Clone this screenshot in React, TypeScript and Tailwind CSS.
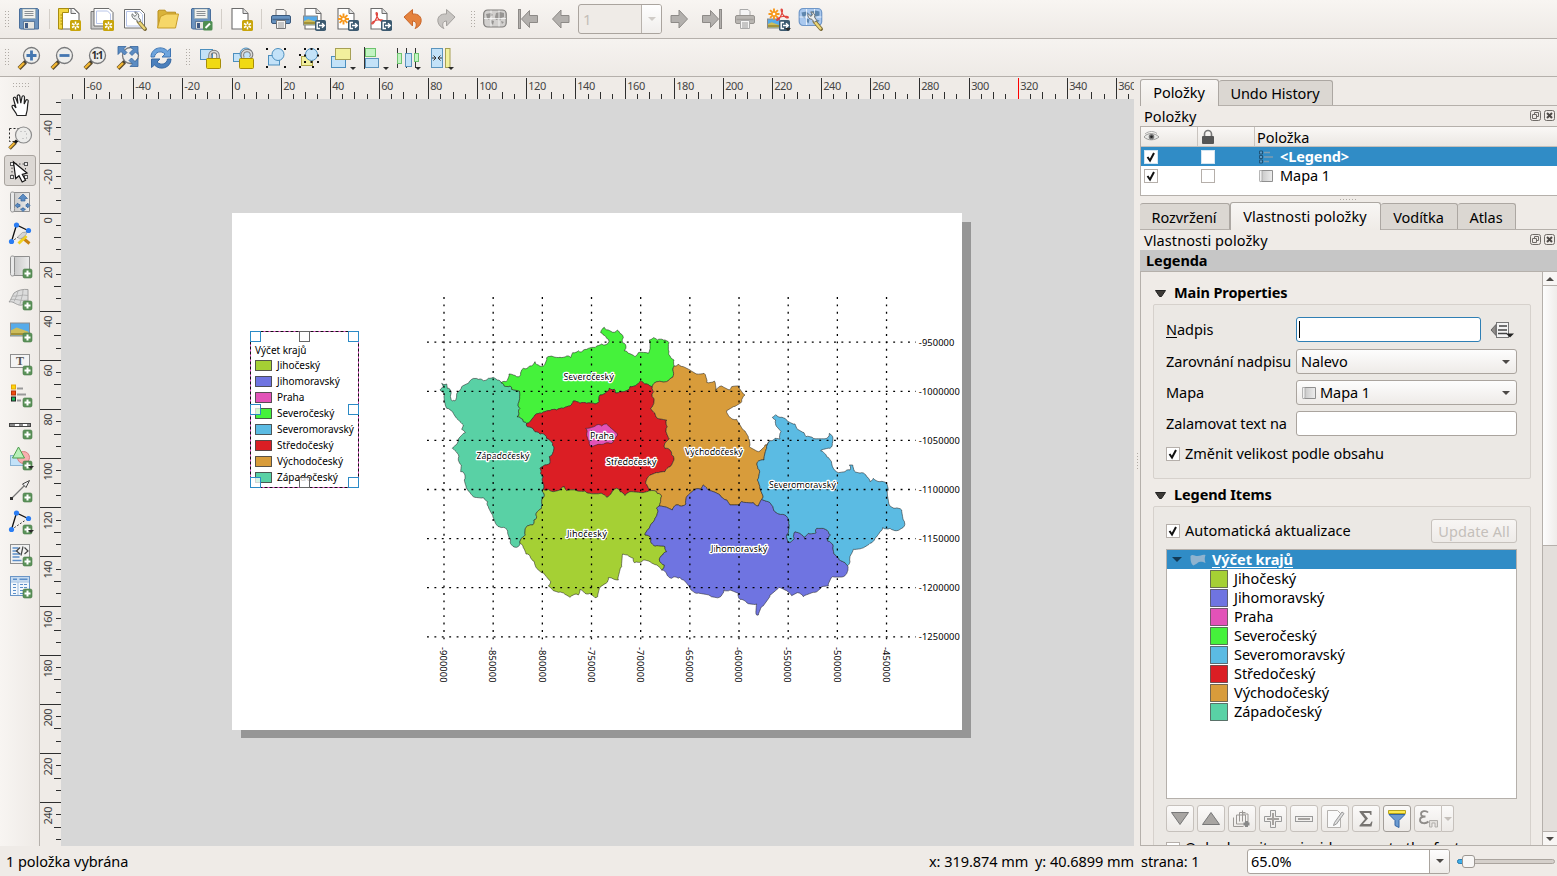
import React from 'react';

type Pt = [number, number];
type Kids = { children?: React.ReactNode };

/* ---------- shared data ---------- */

const REGIONS = [
  { name: 'Jihočeský', color: '#a5d034' },
  { name: 'Jihomoravský', color: '#6f74e1' },
  { name: 'Praha', color: '#e252b8' },
  { name: 'Severočeský', color: '#45f23b' },
  { name: 'Severomoravský', color: '#5bbbe3' },
  { name: 'Středočeský', color: '#db1e24' },
  { name: 'Východočeský', color: '#d89c3b' },
  { name: 'Západočeský', color: '#59d1a5' },
];

/* ---------- icons ---------- */

const Ico = ({ children }: Kids) => (
  <svg width="24" height="24" viewBox="0 0 24 24" className="block shrink-0 overflow-visible">{children}</svg>
);

const Plus = () => (
  <g>
    <rect x="15" y="15" width="9" height="9" rx="1.6" fill="#5b9259" stroke="#487a48" strokeWidth=".6" />
    <path d="M19.5 16.500v6M16.5 19.500h6" stroke="#fff" strokeWidth="2" />
  </g>
);
const Star = () => (
  <g>
    <rect x="13" y="13" width="11" height="11" rx="1.6" fill="#c8a50b" />
    <path d="M18.5 14.5v8M15 16.5l7 4M22 16.5l-7 4" stroke="#fff" strokeWidth="1.5" />
    <circle cx="18.5" cy="18.5" r="1.3" fill="#c8a50b" />
  </g>
);
const Export = () => (
  <g>
    <rect x="13" y="13" width="11" height="11" rx="1.8" fill="#3c5a70" />
    <path d="M18 15.5h-2.8v6H18M17 18.5h5M20 16.3l2.3 2.2-2.3 2.2" fill="none" stroke="#fff" strokeWidth="1.4" />
  </g>
);
const Caret = ({ x = 19, y = 20 }: { x?: number; y?: number }) => (
  <path d={`M${x} ${y}h6l-3 3z`} fill="#2b2b2b" />
);
const Lens = ({ children }: Kids) => (
  <Ico>
    <path d="M2 22.5l6.5-6.5" stroke="#5a4a2a" strokeWidth="4" />
    <path d="M2 22l5-5" stroke="#f2b632" strokeWidth="2.4" />
    <path d="M8 16l2-2" stroke="#222" strokeWidth="3" />
    <circle cx="14.5" cy="9.5" r="8" fill="#eeeeec" stroke="#77787a" strokeWidth="1.3" />
    {children}
  </Ico>
);
const Floppy = ({ children }: Kids) => (
  <Ico>
    <path d="M3 1.5h17.5l1 1V22H3.5l-1-1V2z" fill="#6c93bf" stroke="#4a6f9c" />
    <rect x="5.5" y="2" width="13" height="9.5" fill="#f2f2ee" stroke="#9aa" strokeWidth=".6" />
    <path d="M7.5 4.5h9M7.5 6.5h9M7.5 8.5h9" stroke="#8b9094" />
    <path d="M6.5 14.5h11V22h-11z" fill="#e6e6e2" stroke="#3e6088" strokeWidth=".7" />
    <rect x="8" y="16" width="3" height="5" fill="#3e5a85" />
    {children}
  </Ico>
);
const Page = ({ d = 'M3 1.5h11l5 5V22H3z' }: { d?: string }) => (
  <g>
    <path d={d} fill="#fff" stroke="#6c6c6c" strokeWidth="1.1" />
    <path d="M14 1.5v5h5" fill="#e2e2e2" stroke="#6c6c6c" strokeWidth="1" />
  </g>
);
const Wrench = () => (
  <g>
    <path d="M15.500 14.500l6.500 7.500" stroke="#7a6a36" strokeWidth="4" strokeLinecap="round" />
    <path d="M15.500 14.500l6 7" stroke="#ecd676" strokeWidth="2.3" strokeLinecap="round" />
    <path d="M9.200 6.800a4 4 0 0 0 3.700 5.500l2.600 3 2.200-2-2.200-3a4 4 0 0 0-3.800-5.400l1.800 2.600-1.500 2z" fill="#eceeee" stroke="#6d7273" strokeWidth="1" />
  </g>
);
const Printer = ({ gray = false }: { gray?: boolean }) => (
  <Ico>
    <path d="M7 2.5h8l2 2V10H7z" fill="#f5f5f5" stroke={gray ? '#aaa' : '#777'} />
    <rect x="2.5" y="8.5" width="19" height="8" rx="1.5" fill={gray ? '#b9b6b2' : '#6591bf'} stroke={gray ? '#96938f' : '#39587c'} />
    <path d="M3.5 12.5h17" stroke={gray ? '#a29f9b' : '#44678f'} strokeWidth="1.5" />
    <path d="M7.5 13.5h9v8h-9z" fill="#f5f5f5" stroke={gray ? '#aaa' : '#777'} />
    <path d="M9 16h6M9 18h6M9 20h6" stroke="#8d8d8d" strokeWidth=".9" />
  </Ico>
);
const Aster = ({ x, y }: { x: number; y: number }) => (
  <g transform={`translate(${x} ${y})`} stroke="#f7981d" strokeWidth="1.900">
    <path d="M0-5.5v11M-5.5 0h11M-3.9-3.9l7.8 7.8M3.9-3.9l-7.8 7.8" />
    <circle r="1.3" fill="#fff" stroke="none" />
  </g>
);
const Pdf = ({ x, y }: { x: number; y: number }) => (
  <path transform={`translate(${x} ${y})`} d="M5 0c1.6 0 1 3.6-.4 6.2C3.300 9 1.400 12 .4 11.400-.6 10.400 2.500 8 6 7.500c3-.5 6-.2 5.800 1-.5 1.400-4-.5-5.600-3.200C5 3.200 4 0 5 0z" fill="none" stroke="#e0443c" strokeWidth="1.2" />
);
const Photo = ({ x, y, w, h }: { x: number; y: number; w: number; h: number }) => (
  <g>
    <rect x={x} y={y} width={w} height={h} fill="#56abea" stroke="#8b8b8b" />
    <path d={`M${x + 0.5} ${y + h * 0.55}l${w * 0.3}-${h * 0.2} ${w * 0.62} ${h * 0.32}v${h * 0.28}h-${w - 1}z`} fill="#cdbd5b" />
    <path d={`M${x + 0.5} ${y + h - 2}h${w - 1}`} stroke="#a39238" strokeWidth="2" />
  </g>
);
const BigArrow = ({ flip = false, bar = false }: { flip?: boolean; bar?: boolean }) => (
  <Ico>
    <g transform={flip ? 'translate(24 0) scale(-1 1)' : undefined} fill="#b3b0ad" stroke="#8d8a87">
      {bar && <rect x="2.500" y="2.500" width="2" height="19" />}
      <path d={bar ? 'M5.500 12l8-8.500v5h8v7h-8v5z' : 'M3.500 12l8.500-9v5.500h8v7h-8V21z'} />
    </g>
  </Ico>
);
const WorldMap = ({ gray = false }: { gray?: boolean }) => (
  <g>
    <rect x="0.700" y="3" width="22.500" height="17" rx="4" fill={gray ? '#d2d0ce' : '#a9c8ee'} stroke={gray ? '#7f7d7b' : '#6f97c8'} strokeWidth="1.200" />
    <path d="M3 7l5-1 2 2-3 2-1 3-2-2zM8 13l3 1-1 4-2-2zM13 6l4-1 4 1v4l-3 1-1 3-1-2-3 1-1-3zM18 14l3 1-2 2z" fill={gray ? '#979593' : '#5e86ad'} />
    <path d="M1 11.500h22M8 3.500v16M16 3.500v16" stroke="#fff" strokeOpacity=".8" strokeWidth=".9" />
  </g>
);
const Lock = ({ open = false }: { open?: boolean }) => (
  <g>
    <path d={open ? 'M12 12c-2-5 1-7.500 4-7.500 4 0 6 4 3.500 7' : 'M12 13V9.500a4 4 0 0 1 8 0V13'} fill="none" stroke="#777" strokeWidth="3.400" />
    <path d={open ? 'M12 12c-2-5 1-7.500 4-7.500 4 0 6 4 3.500 7' : 'M12 13V9.500a4 4 0 0 1 8 0V13'} fill="none" stroke="#dcdcda" strokeWidth="1.600" />
    <rect x="8.500" y="12.500" width="14" height="10" rx="1" fill="#f0da12" stroke="#a78d0a" />
  </g>
);
const Corners = ({ x, y, s }: { x: number; y: number; s: number }) => (
  <g fill="#111">
    {[0, 0.5, 1].flatMap((a) => [0, 0.5, 1].map((b) => (a === 0.5 && b === 0.5 ? null : <rect key={`${a}${b}`} x={x + a * s - 1} y={y + b * s - 1} width="2" height="2" />)))}
  </g>
);
const NodeShape = ({ plus = false }: { plus?: boolean }) => (
  <g>
    <path d="M3.500 19.500L8.500 3 20 8.500" fill="none" stroke="#111" strokeWidth="1.300" />
    <path d="M3.500 19.500L20 8.500" stroke="#111" strokeDasharray="1.500 2" />
    {!plus && (
      <g>
        <path d="M13 14.500l8.500 7" stroke="#c98210" strokeWidth="3" />
        <path d="M10.500 21.500l8-7.500" stroke="#f0d020" strokeWidth="3" />
        <path d="M9.500 15l5-4.500 4.500-.5-1 2.500-3.500 3.500-3 1z" fill="#d5d5d5" stroke="#999" strokeWidth=".7" />
      </g>
    )}
    <circle cx="3.500" cy="19.500" r="2.600" fill="#2b7df3" />
    <circle cx="8.500" cy="3" r="2.600" fill="#2b7df3" />
    <circle cx="20.500" cy="8.500" r="2.600" fill="#2b7df3" />
  </g>
);
const Sheet = () => (
  <g>
    <path d="M6 2.500h15.500V21.500H4" fill="url(#sheet)" stroke="#8f8f8f" />
    <path d="M6.500 18.500V3.500c0-2-4-2-4 0v16c0 2 1 2.500 2 2.500 2 0 2-1 2-3.500z" fill="#e9e9e9" stroke="#8f8f8f" />
  </g>
);
const SmallSheet = () => (
  <svg width="16" height="16" viewBox="0 0 16 16" className="block shrink-0">
    <path d="M3 2.500h11.500v11H2z" fill="url(#sheet)" stroke="#8f8f8f" />
    <path d="M4 12V2.500H1.500v10c0 1.500 2.500 1.500 2.500-.5z" fill="#f0f0f0" stroke="#a5a5a5" strokeWidth=".8" />
  </svg>
);

/* ---------- toolbars ---------- */

const Tool = ({ children }: Kids) => <div className="flex w-[33px] shrink-0 pl-1">{children}</div>;
const Sep = () => <div className="flex w-[7px] shrink-0 justify-center"><div className="h-5 w-px bg-[#d3cec8]" /></div>;
const Grip = () => (
  <svg width="5" height="17" viewBox="0 0 5 17" className="block">
    {[0, 3, 6, 9, 12, 15].map((y) => <path key={y} d={`M0 ${y + 0.5}h1M3 ${y + 0.5}h1`} stroke="#b0aba5" />)}
  </svg>
);

const TopBar = () => (
  <div className="flex h-[39px] shrink-0 items-center border-b border-[#b5b0ab] bg-linear-to-b from-[#f8f5f2] to-[#eeeae6]">
    <div className="flex w-[13px] justify-center pl-[1px]"><Grip /></div>
    <Tool><Floppy /></Tool>
    <Sep />
    <Tool>
      <Ico>
        <Page d="M4 1.500h13l5 5V22H4z" />
        <path d="M1.500 1.500h10v4h-6V22h-4z" fill="#f3d742" stroke="#a88c10" />
        <path d="M3.500 8h2M3.500 11h2M3.500 14h2M3.500 17h2" stroke="#a88c10" />
        <Star />
      </Ico>
    </Tool>
    <Tool>
      <Ico>
        <path d="M1 4.500h13l4 4V22H1z" fill="#c9c9c9" stroke="#777" />
        <path d="M4 1.500h15l4 4V19H4z" fill="#fff" stroke="#6c6c6c" />
        <path d="M6.500 4h11l3 3v9.500h-14z" fill="none" stroke="#b9c6ea" />
        <Star />
      </Ico>
    </Tool>
    <Tool>
      <Ico>
        <path d="M1.500 2.500h16l4 4V21h-20z" fill="#fff" stroke="#6c6c6c" />
        <path d="M3.500 4.500h13l3 3V19h-16z" fill="none" stroke="#b9c6ea" />
        <Wrench />
      </Ico>
    </Tool>
    <Tool>
      <Ico>
        <path d="M2 20.500V4l1-.8h6l1.500 2h9V9" fill="#d9b33a" stroke="#b98f1d" />
        <path d="M1.500 21L4.500 9.500 10 7h12.500l-3 14z" fill="#f6d768" stroke="#c79c28" />
      </Ico>
    </Tool>
    <Tool>
      <Floppy>
        <rect x="14" y="14" width="9.500" height="9.500" rx="1.500" fill="#4e8e52" />
        <path d="M16.500 21l4.500-4.500" stroke="#fff" strokeWidth="2" />
      </Floppy>
    </Tool>
    <Sep />
    <Tool><Ico><Page /><Star /></Ico></Tool>
    <Sep />
    <Tool><Printer /></Tool>
    <Tool><Ico><Page /><Photo x={1.5} y={9} w={14} h={9} /><Export /></Ico></Tool>
    <Tool><Ico><Page /><Aster x={8.500} y={12} /><Export /></Ico></Tool>
    <Tool><Ico><Page /><Pdf x={3.500} y={5.500} /><Export /></Ico></Tool>
    <Tool>
      <Ico><path d="M3 10l8.500-7.500v4.500c6-.5 9.500 3 8.500 8-.6 3-3 5.500-6 6.500 2-2.500 2-7.500-2.500-7.500v5z" fill="#e5823d" stroke="#c9662a" /></Ico>
    </Tool>
    <Tool>
      <Ico><path d="M21 10l-8.500-7.500v4.500c-6-.5-9.500 3-8.500 8 .6 3 3 5.500 6 6.500-2-2.500-2-7.500 2.500-7.500v5z" fill="#c8c5c2" stroke="#a3a09d" /></Ico>
    </Tool>
    <div className="flex w-4 justify-center pl-1"><Grip /></div>
    <Tool><Ico><WorldMap gray /></Ico></Tool>
    <Tool><BigArrow bar /></Tool>
    <Tool><BigArrow /></Tool>
    <div className="mr-px flex h-[30px] w-[84px] overflow-hidden rounded-[3px] border border-[#aaa49e] bg-[#efebe7]">
      <div className="flex flex-1 items-center pl-1 text-[15px] text-[#c4beb8]">1</div>
      <div className="flex w-[20px] items-center justify-center border-l border-[#b8b2ac] bg-linear-to-b from-[#fefefe] to-[#f0eeec]">
        <svg width="8" height="4" viewBox="0 0 8 4"><path d="M0 0h8l-4 4z" fill="#d0ccc8" /></svg>
      </div>
    </div>
    <Tool><BigArrow flip /></Tool>
    <Tool><BigArrow flip bar /></Tool>
    <Tool><Printer gray /></Tool>
    <Tool>
      <Ico>
        <Photo x={1.500} y={12} w={12} h={9} />
        <Aster x={8} y={7} />
        <Pdf x={10.500} y={2} />
        <Export />
        <Caret x={19} y={21} />
      </Ico>
    </Tool>
    <Tool><Ico><g transform="translate(-.5 -1.500)"><WorldMap /></g><Wrench /></Ico></Tool>
  </div>
);

const SecondBar = () => (
  <div className="flex h-[38px] shrink-0 items-center border-b border-[#b5b0ab] bg-linear-to-b from-[#f6f3f0] to-[#eeeae6]">
    <div className="flex w-[13px] justify-center pl-[1px]"><Grip /></div>
    <Tool><Lens><path d="M14.500 4.500v10M9.500 9.500h10" stroke="#4477b1" strokeWidth="2.800" /></Lens></Tool>
    <Tool><Lens><path d="M9.500 9.500h10" stroke="#4477b1" strokeWidth="2.800" /></Lens></Tool>
    <Tool><Lens><text x="8.500" y="13.200" textLength="12" fontSize="10" fontWeight="700" fill="#2b2b2b">1:1</text></Lens></Tool>
    <Tool>
      <Lens>
        {[0, 90, 180].map((r) => (
          <path key={r} transform={`rotate(${r} 12 10.500)`} d="M2 .5h8L7.500 3l3.500 3.500-2.500 2.500L5 5.500 2 8.500z" fill="#5b8cc3" stroke="#36659c" strokeWidth=".8" />
        ))}
      </Lens>
    </Tool>
    <Tool>
      <Ico>
        <path d="M2 11C2 2 13-1 18.500 5l3-2.500V11h-8.500l3-3C12 4 6 6 5.500 11z" fill="#6da4dd" stroke="#3f75b3" />
        <path d="M22 13c0 9-11 12-16.500 6l-3 2.500V13H11l-3 3c4 4 10 2 10.500-3z" fill="#4b80bd" stroke="#3869a2" />
      </Ico>
    </Tool>
    <div className="flex w-4 justify-center pl-1"><Grip /></div>
    <Tool><Ico><rect x="2.500" y="3.500" width="12" height="10" fill="#c3e2f8" stroke="#4c8fbe" /><Lock /></Ico></Tool>
    <Tool><Ico><rect x="2.500" y="7.500" width="11" height="8" fill="#c3e2f8" stroke="#4c8fbe" /><circle cx="15" cy="8" r="6" fill="#c3e2f8" stroke="#4c8fbe" /><Lock open /></Ico></Tool>
    <Tool><Ico><rect x="4.500" y="9.500" width="11" height="9.500" fill="#c3e2f8" stroke="#4c8fbe" /><circle cx="14" cy="8.500" r="6" fill="#c3e2f8" stroke="#4c8fbe" /><path d="M2 2h2v2H2zM20 2h2v2h-2zM2 20h2v2H2zM20 20h2v2h-2z" fill="#111" /></Ico></Tool>
    <Tool><Ico><rect x="4.500" y="10.500" width="11" height="9" fill="#f2f09d" stroke="#b2a84c" /><circle cx="14.500" cy="8.500" r="6" fill="#c3e2f8" stroke="#4c8fbe" /><Corners x={8} y={3} s={13} /><path d="M2 8h2v2H2zM2 20h2v2H2zM15 20h2v2h-2z" fill="#111" /></Ico></Tool>
    <Tool><Ico><rect x="1.500" y="10.500" width="14" height="11" fill="#c3e2f8" stroke="#4c8fbe" /><rect x="5.500" y="2.500" width="15" height="11" fill="#f2f09d" stroke="#a7a055" /><Caret x={20} y={21} /></Ico></Tool>
    <Tool><Ico><path d="M1.500 1v22" stroke="#333" /><rect x="2.500" y="2.500" width="10" height="8" fill="#c2f4c2" stroke="#6ec36e" /><rect x="2.500" y="12.500" width="13" height="9" fill="#c3e2f8" stroke="#5b94bd" /><Caret x={20} y={21} /></Ico></Tool>
    <Tool><Ico><path d="M1.500 2v20M10.500 2v20M19.500 2v20" stroke="#333" /><rect x="1.500" y="7.500" width="4" height="10" fill="#c2f4c2" stroke="#6ec36e" /><rect x="9.500" y="7.500" width="6" height="13" fill="#c3e2f8" stroke="#5b94bd" /><rect x="18.500" y="7.500" width="4" height="8" fill="#c2f4c2" stroke="#6ec36e" /><Caret x={19} y={21} /></Ico></Tool>
    <Tool><Ico><rect x="2.500" y="2.500" width="11" height="19" fill="#c3e2f8" stroke="#5b94bd" /><rect x="16.500" y="2.500" width="4.500" height="19" fill="#f2f09d" stroke="#a7a055" /><path d="M3 12h3.500M4.500 9.500L7 12l-2.500 2.500M13 12H9.500M11.500 9.500L9 12l2.500 2.500" fill="none" stroke="#333" /><Caret x={19} y={21} /></Ico></Tool>
  </div>
);

const SIDE_ICONS: React.ReactNode[] = [
  <path key="hand" d="M9 21.500c-.6-3-5-6.500-5-9 0-1.600 1.800-1.600 2.700-.2L8 14 5.500 5c-.5-2 1.700-2.500 2.400-.6l2 5.200L9.200 2.500c-.1-2.100 2.300-2.300 2.600-.3l1 7L14 3c.4-1.900 2.600-1.500 2.500.4l-.3 6.600 1.600-3.600c.8-1.400 2.700-.7 2.400.9-.6 2.700-.7 5.200-.9 7.700-.1 2.500-1.100 4-1.300 6.500z" fill="#fff" stroke="#222" strokeWidth="1.200" />,
  <g key="zoom" transform="translate(0 -1)">
    <rect x="1.500" y="3.500" width="14" height="13" fill="none" stroke="#222" strokeDasharray="2 2" />
    <path d="M1.500 23.500l6-6" stroke="#5a4a2a" strokeWidth="3.600" /><path d="M1.500 23l5-5" stroke="#f2b632" strokeWidth="2" /><path d="M7 17.500l2-2" stroke="#111" strokeWidth="3" />
    <circle cx="15.500" cy="10" r="8" fill="#ececea" stroke="#8b8b8b" strokeWidth="1.200" />
    <path d="M12 6.500h6.500v7H12" fill="none" stroke="#c9c9c9" strokeDasharray="2 2" />
  </g>,
  <g key="select">
    <rect x="4" y="5" width="13.500" height="13.500" fill="none" stroke="#444" strokeDasharray="1.500 2" />
    {[[2.500, 3.500], [16.500, 3.500], [2.500, 16.500], [16.500, 16.500]].map(([x, y]) => <rect key={`${x}${y}`} x={x} y={y} width="3" height="3" fill="#eee" stroke="#555" />)}
    <path d="M5.500 3l2.200 16.500 3.300-2.800 3.200 6.300 3.300-1.700-3.200-6L19 14z" fill="#fff" stroke="#111" strokeWidth="1.200" />
  </g>,
  <g key="move">
    <Sheet />
    <path d="M15 4l4.500 4.500H17V11h-4V8.500h-2.500zM7 15.500l3-2.500v1.500h2v2h-2V18zM22 15.500L19.500 13v1.500H18v2h1.500V18zM15 21.500L12.500 19h1.500v-1h2v1h1.500z" fill="#5b8cc3" stroke="#36659c" strokeWidth=".7" />
  </g>,
  <NodeShape key="nodes" />,
  <g key="map"><Sheet /><Plus /></g>,
  <g key="3d">
    <path d="M1 16c2-2 3-6 5-9 4-3 9-4 14-3.500V18c-4-.5-6 2-9 1-4-1-6-4-10-3z" fill="#dcdcdc" stroke="#999" strokeWidth=".9" />
    <path d="M4.500 10c5 1 9-2 15.500-.5M3 13.500c6-1 9 2 17 .5M10 5c-1 4-2 7-4 10.500M15 4c0 5-2 9-3 14" fill="none" stroke="#aaa" strokeWidth=".8" />
    <Plus />
  </g>,
  <g key="pic"><Photo x={2.500} y={5} w={19} h={13} /><Plus /></g>,
  <g key="label" transform="translate(0 1)"><rect x="2.500" y="3.500" width="19" height="13" fill="#f4f4f4" stroke="#8f8f8f" /><text x="12" y="14" fontSize="12" textAnchor="middle" fontFamily="Liberation Serif" fontWeight="700" fill="#555">T</text><Plus /></g>,
  <g key="legend" transform="translate(0 1)">
    <path d="M9 5.500h6M9 11.500h9M9 17.500h4" stroke="#999" strokeWidth="1.800" />
    <rect x="3.500" y="2" width="4" height="4" fill="#fbd70b" stroke="#e5a50a" /><rect x="3.500" y="8" width="4" height="4" fill="#f04b12" stroke="#b53206" /><rect x="3.500" y="14" width="4" height="4" fill="#16b556" stroke="#222" /><Plus />
  </g>,
  <g key="scale" transform="translate(0 1)"><rect x="1.500" y="8.500" width="21" height="3" fill="#fff" stroke="#444" /><path d="M2 10h5M11 10h4M19 10h3" stroke="#8b8b8b" strokeWidth="2" /><Plus /></g>,
  <g key="shape"><rect x="2.500" y="9.500" width="13" height="10" fill="#c3e2f8" stroke="#8bb4d4" /><circle cx="15.500" cy="11.500" r="6" fill="#f7b0b0" stroke="#d98080" /><path d="M10.500 1l6 11h-12z" fill="#b9f0b9" stroke="#4b9e4b" /><Plus /><Caret x={20} y={20} /></g>,
  <g key="arrow"><path d="M3.500 20.500L18 6" stroke="#777" strokeWidth="1.200" /><rect x="2" y="19" width="3" height="3" fill="#333" /><path d="M21.500 2.500L14.500 6l3.500 3.500z" fill="#eee" stroke="#444" /><Plus /></g>,
  <g key="node2"><NodeShape plus /><Plus /><Caret x={20} y={20} /></g>,
  <g key="html"><rect x="2.500" y="2.500" width="19" height="19" fill="#f2f2f2" stroke="#8f8f8f" /><path d="M4.500 6h6M4.500 9h5M4.500 12h8M4.500 15h7M4.500 18.500h9" stroke="#5c8fc9" strokeWidth="1.600" /><path d="M12 5.500L8.500 9l3.500 3M16.500 5.500L20 9l-3.500 3M15 4.500l-2 9" fill="none" stroke="#444" strokeWidth="1.200" /><Plus /></g>,
  <g key="table"><rect x="2.500" y="2.500" width="19" height="19" fill="#f4f8fc" stroke="#6a95c6" /><rect x="3" y="3" width="18" height="4.500" fill="#c5daf0" /><path d="M5 5.300h4M11.500 5.300h8" stroke="#5c8fc9" strokeWidth="1.500" /><path d="M3 8h18M10 8v13" stroke="#9dbde0" /><path d="M5 10.500h3.500M12 10.500h7M5 13.500h3.500M12 13.500h7M5 16.500h3.500M12 16.500h3M5 19.500h3.500M12 19.500h3" stroke="#5c8fc9" strokeDasharray="3 1" /><Plus /></g>,
];

const SideBar = () => (
  <div className="flex w-10 shrink-0 flex-col border-r border-[#b5b0ab] bg-linear-to-r from-[#f8f5f2] to-[#eeeae6]">
    <svg width="40" height="13" viewBox="0 0 40 13" className="block">
      {[13, 16, 19, 22, 25, 28].map((x) => <path key={x} d={`M${x} 6.500h1M${x} 9.500h1`} stroke="#b0aba5" />)}
    </svg>
    {SIDE_ICONS.map((icon, i) => (
      <div key={i} className="flex h-8 w-10 shrink-0 items-center pl-1">
        {i === 2 ? (
          <div className="mt-px flex h-[31px] w-8 items-center justify-center rounded-[3px] border border-[#a9a49f] bg-[#dcd8d4]"><Ico>{icon}</Ico></div>
        ) : (
          <div className="flex w-8 justify-center"><Ico>{icon}</Ico></div>
        )}
      </div>
    ))}
  </div>
);

/* ---------- rulers ---------- */

const MM = 2.457;
const range = (from: number, to: number, step: number) =>
  Array.from({ length: Math.floor((to - from) / step) + 1 }, (_, i) => from + i * step);
const labelLen = (v: number) => String(Math.abs(v)).length * 6 + (v < 0 ? 3.800 : 0);

const TopRuler = () => (
  <svg width="1094" height="22" viewBox="40 77 1094 22" className="block shrink-0">
    <rect x="40" y="77" width="1094" height="22" fill="#efebe7" />
    {range(-65, 365, 5).map((v) => {
      const x = Math.floor(232 + v * MM) + 0.5;
      const top = v % 20 === 0 ? 78 : v % 10 === 0 ? 92 : 94;
      return <path key={v} d={`M${x} ${top}V99`} stroke="#2e2e2e" />;
    })}
    {range(-60, 360, 20).map((v) => (
      <text key={v} x={Math.floor(232 + v * MM) + 2.200} y="90" fontSize="11" fill="#444" textLength={labelLen(v)}>{v}</text>
    ))}
    <path d="M1018.500 78V99" stroke="#f00" />
  </svg>
);

const LeftRuler = () => (
  <svg width="21" height="747" viewBox="40 99 21 747" className="block shrink-0">
    <rect x="40" y="99" width="21" height="747" fill="#efebe7" />
    {range(-45, 255, 5).map((v) => {
      const y = Math.floor(213 + v * MM) + 0.5;
      const left = v % 20 === 0 ? 40 : v % 10 === 0 ? 54 : 56;
      return <path key={v} d={`M${left} ${y}H61`} stroke="#2e2e2e" />;
    })}
    {range(-40, 240, 20).map((v) => {
      const y = Math.floor(213 + v * MM) + (v < 0 ? 6 : 4.500) + labelLen(v);
      return <text key={v} transform={`translate(52.300 ${y}) rotate(-90)`} fontSize="11" fill="#444" textLength={labelLen(v)}>{v}</text>;
    })}
  </svg>
);

/* ---------- map ---------- */

const parse = (s: string, dx = 0, dy = 0): Pt[] =>
  s.trim().split(/\s+/).map((p) => {
    const [x, y] = p.split(',').map(Number);
    return [x + dx, y + dy];
  });

/* Breaks a border into short uneven steps; the same input always gives the same border. */
const rough = (pts: Pt[]): Pt[] => {
  const out: Pt[] = [pts[0]];
  for (let i = 1; i < pts.length; i++) {
    const [ax, ay] = pts[i - 1];
    const [bx, by] = pts[i];
    const len = Math.hypot(bx - ax, by - ay) || 1;
    const n = Math.max(1, Math.round(len / 5));
    for (let k = 1; k < n; k++) {
      const t = k / n;
      const r = Math.sin(ax * 12.9 + ay * 78.2 + k * 37.7) * 2.600;
      out.push([ax + (bx - ax) * t - ((by - ay) / len) * r, ay + (by - ay) * t + ((bx - ax) / len) * r]);
    }
    out.push([bx, by]);
  }
  return out;
};
const seg = (s: string, dx = 0, dy = 0) => rough(parse(s, dx, dy));
const rev = (p: Pt[]) => [...p].reverse();
const poly = (...parts: Pt[][]) => parts.flat().map((p) => p.map((n) => n.toFixed(1)).join(',')).join(' ');

const AB = seg('243,278 252,287 270,288 275,298 298,303 299,320 295,340 300,355 297,370 291,380 303,385 310,395 320,400');
const BC = seg('320,400 322,410 338,415 345,425 360,432 375,435 380,445 398,460 402,470 398,490 388,500 390,520 375,525 360,535 362,550 370,560 368,575 372,590 368,598');
const CD = seg('368,598 372,610 368,625 368,645 365,655 352,665 350,680 342,690 338,705 318,712 316,735 308,742 300,760');
const DA = seg('300,760 290,772 275,765 272,750 263,725 250,712 230,705 218,675 205,650 203,635 190,623 160,620 148,605 138,588 133,570 132,550 122,545 124,525 115,505 112,490 97,475 108,465 115,450 136,428 125,418 130,405 110,385 100,370 80,355 75,340 73,315 66,305 60,300 70,290 65,280 80,282 82,295 90,298 92,315 97,333 105,333 110,318 115,305 125,290 145,280 155,268 175,268 190,272 205,265 220,262 232,270 243,278');
const AF = seg('243,278 258,275 267,252 280,255 290,260 302,255 310,235 325,232 335,228 345,215 355,225 370,228 380,203 400,200 420,202 440,198 452,203 458,188 475,182 485,186 500,178 520,172 530,168 545,162 560,163 567,155 560,145 550,135 542,128 553,112 565,120 578,127 592,120 600,130 610,143 608,158 618,170 612,182 625,190 645,200 655,188 685,190 690,170 688,150 700,143 712,150 730,150 747,158 747,185 750,198 762,210 763,228');
const FE = seg('763,228 760,245 758,262 745,272 725,275 705,278 697,290');
const EB = seg('697,290 690,288 680,282 670,278 663,272 650,285 630,290 620,302 600,305 585,308 583,298 568,295 560,305 540,315 538,335 525,342 500,340 480,340 460,333 450,348 430,355 410,360 390,362 365,370 345,375 335,388 320,400');
const EG = seg('697,290 702,305 697,320 702,335 692,355 705,370 712,385 740,390 742,410 740,430 748,447 735,460 735,475 750,480 755,495 762,505 750,530 735,545 715,548 685,560 677,580 688,602');
const CG = seg('368,598 385,598 400,605 420,600 433,590 440,602 470,602 495,603 510,610 540,610 560,622 575,608 590,595 600,605 615,617 635,605 665,608 688,602');
const GH = seg('688,602 705,602 712,610 725,618 722,635 718,648');
const HI = seg('718,648 710,655 712,670 705,685 695,700 688,715 675,735 690,740 692,755 705,768 735,770 740,785 728,795 718,810 733,825 725,840');
const ID = seg('725,270 710,255 690,245 670,240 655,247 643,248 640,235 622,225 608,222 605,260 595,300 580,297 565,293 558,310 540,322 533,350 525,353 515,345 510,340 495,340 480,328 475,345 460,345 450,352 435,343 415,337 400,332 385,318 392,305 375,285 365,278 350,265 343,245 330,228 318,222 310,203 300,190', 0, 570);
const FK = seg('763,228 775,222 790,230 810,240 830,252 852,250 860,277 883,273 887,302 905,288 928,300 935,290 955,288 975,315 965,335 940,350 920,362 932,383 950,388 970,420 985,445 988,470 1015,485 1035,465 1050,452');
const KJ = seg('1050,452 1040,475 1035,490 1032,510 1012,517 1018,540 1012,570 1020,595 1028,615 1025,628');
const JH = seg('1025,628 1015,648 1000,638 965,635 958,645 930,645 920,630 900,615 880,605 865,600 850,585 842,598 825,598 802,618 798,642 780,648 768,645 757,660 740,652 718,648');
const JL = seg('245,58 265,65 280,85 288,97 308,103 322,112 326,130 325,150 320,165 327,187 342,175 345,155 355,158 372,172 385,160 408,158 410,145 425,145 445,155 452,165 443,183 460,198 465,225 478,240 495,248 503,257', 780, 570);
const LI = seg('503,257 502,275 490,290 458,290 445,318 425,320 405,337 370,350 352,338 335,347 315,330 297,322 270,345 245,380 235,405 228,402 230,372 200,368 180,358 175,340 150,330 132,330 118,352 90,347 50,340 30,325 10,300 0,292 -10,292 -25,295 -40,282 -55,270', 780, 570);
const KL1 = seg('270,452 285,445 300,447 303,425 290,410 287,390 277,382 287,374 300,382 320,390 345,402 350,415 372,428 378,440 400,445 440,445 448,430 458,440 457,460 450,475 422,482 440,500 455,520 460,535 475,548 495,545 510,540 508,525 518,525 523,543 545,548 560,560 570,575 580,565 600,575 620,580 625,600 622,610', 780, 0);
const KL2 = seg('622,40 628,75 645,85 665,90 670,120 673,138 650,152 630,145 608,143 600,155 585,175 570,190 545,205 520,208 512,225 510,245 503,257', 780, 570);
const PRAHA = seg('497,415 515,412 530,405 545,408 560,402 570,412 585,425 593,435 580,455 570,460 555,460 540,463 515,472 508,455 500,430 497,415');

const SHAPES = [
  { fill: '#59d1a5', pts: poly(AB, BC, CD, DA) },
  { fill: '#45f23b', pts: poly(AF, FE, EB, rev(AB)) },
  { fill: '#db1e24', pts: poly(EG, rev(CG), rev(BC), rev(EB)) },
  { fill: '#a5d034', pts: poly(CG, GH, HI, ID, rev(CD)) },
  { fill: '#d89c3b', pts: poly(FK, KJ, JH, rev(GH), rev(EG), rev(FE)) },
  { fill: '#6f74e1', pts: poly(JL, LI, rev(HI), rev(JH)) },
  { fill: '#5bbbe3', pts: poly(KL1, KL2, rev(JL), rev(KJ)) },
  { fill: '#e252b8', pts: poly(PRAHA) },
];

const MAP_LABELS: [string, number, number, number][] = [
  ['Severočeský', 563.500, 379.500, 50.500],
  ['Praha', 590, 439, 24],
  ['Středočeský', 606, 464.500, 50.500],
  ['Západočeský', 476.500, 458.700, 53],
  ['Jihočeský', 567, 536.500, 40],
  ['Východočeský', 685, 454.600, 58],
  ['Severomoravský', 769, 487.500, 67],
  ['Jihomoravský', 711, 551.800, 56.500],
];

const MapDrawing = () => (
  <svg width="730" height="517" viewBox="232 213 730 517" className="block">
    <g transform="translate(420 290) scale(.33333)" stroke="#232323" strokeOpacity=".75" strokeWidth="2.200" strokeLinejoin="round">
      {SHAPES.map((s) => <polygon key={s.fill} points={s.pts} fill={s.fill} />)}
    </g>
    <g stroke="#000" strokeWidth="1.300" strokeDasharray="1.900 5.500">
      {range(0, 9, 1).map((i) => <path key={i} d={`M${444 + i * 49.170} 297V643`} />)}
      {range(0, 6, 1).map((i) => <path key={i} d={`M427 ${342.200 + i * 49.100}H916`} />)}
    </g>
    {MAP_LABELS.map(([t, x, y, w]) => (
      <text key={t} x={x} y={y} textLength={w} fontSize="9.300" fill="#000" stroke="#fff" strokeWidth="2.600" strokeLinejoin="round" paintOrder="stroke">{t}</text>
    ))}
    <g fontSize="9.300" fill="#000">
      {range(0, 6, 1).map((i) => (
        <text key={i} x="918.800" y={345.700 + i * 49.100} textLength={i === 0 ? 35.500 : 41}>{-950000 - i * 50000}</text>
      ))}
      {range(0, 9, 1).map((i) => (
        <text key={i} transform={`translate(${440.300 + i * 49.170} 647) rotate(90)`} textLength="35.500">{-900000 + i * 50000}</text>
      ))}
    </g>
  </svg>
);

const LegendItem = () => (
  <div className="absolute top-[118px] left-[18px] h-[157px] w-[109px]">
    <div className="flex flex-col pt-[11px] pl-[5px] text-[10px] leading-4 tracking-normal text-black">
      <div className="h-[15px]">Výčet krajů</div>
      {REGIONS.map((r) => (
        <div key={r.name} className="flex h-4 items-center">
          <svg width="17" height="11" className="mr-[5px] block"><rect x=".5" y=".5" width="16" height="10" fill={r.color} stroke="#333" strokeOpacity=".8" /></svg>
          <span>{r.name}</span>
        </div>
      ))}
    </div>
    <svg width="109" height="157" viewBox="0 0 109 157" className="absolute top-0 left-0">
      <rect x=".5" y=".5" width="108" height="156" fill="none" stroke="#e85ad0" />
      <rect x=".5" y=".5" width="108" height="156" fill="none" stroke="#111" strokeDasharray="3 2" />
      {[0.500, 49.500, 98.500].flatMap((x, i) => [0.500, 73.500, 146.500].map((y, j) =>
        i === 1 && j === 1 ? null : <rect key={`${i}${j}`} x={x} y={y} width="10" height="10" fill="#fff" fillOpacity=".75" stroke={i === 1 ? '#666' : '#2b8ac6'} />
      ))}
    </svg>
  </div>
);

const Canvas = () => (
  <div className="relative h-[747px] w-[1073px] shrink-0 overflow-hidden bg-[#d7d7d7]">
    <div className="absolute top-[123px] left-[180px] h-[516px] w-[730px] bg-[#969696]" />
    <div className="absolute top-[114px] left-[171px] h-[517px] w-[730px] bg-white">
      <MapDrawing />
      <LegendItem />
    </div>
  </div>
);

/* ---------- right dock ---------- */

/* Text that sits one pixel above the middle of its row. */
const Raised = ({ children }: Kids) => <span className="-mt-0.5 whitespace-nowrap">{children}</span>;

const DockTitle = ({ children }: Kids) => (
  <div className="flex h-5 shrink-0 items-center justify-between pr-[2px] pl-1">
    <span className="tracking-[0.08px]">{children}</span>
    <svg width="25" height="12" viewBox="0 0 25 12" fill="none" stroke="#6f6b67">
      <rect x=".5" y=".5" width="10" height="10" rx="2" />
      <rect x="14.500" y=".5" width="10" height="10" rx="2" />
      <path d="M4.500 4.500v-2h4v4h-2M2.500 4.500h4v4h-4z" />
      <path d="M17 3l5 5M22 3l-5 5" stroke="#4c4946" strokeWidth="2" />
    </svg>
  </div>
);
const Check = ({ on = false, plain = false }: { on?: boolean; plain?: boolean }) => (
  <svg width="14" height="14" viewBox="0 0 14 14" className="block shrink-0">
    <rect x=".5" y=".5" width="13" height="13" fill="#fff" stroke={plain ? '#d5e6f2' : '#b5afaa'} />
    {on && <path d="M3.500 7l2.500 3.500L10 3" fill="none" stroke="#111" strokeWidth="2" />}
  </svg>
);
const Tab = ({ children, size, active = false }: Kids & { size: string; active?: boolean }) => (
  <div className={`${size} flex shrink-0 items-center justify-center rounded-t-[3px] border border-[#aca7a2] pr-px ${active ? 'z-10 border-b-0 bg-linear-to-b from-[#f8f6f4] to-[#efebe7]' : 'border-l-0 bg-[#dbd7d2]'}`}>
    {children}
  </div>
);
const Arrow = ({ color = '#4c4946', up = false }: { color?: string; up?: boolean }) => (
  <svg width="8" height="4" viewBox="0 0 8 4" className="block shrink-0"><path d={up ? 'M0 4h8L4 0z' : 'M0 0h8L4 4z'} fill={color} /></svg>
);
const Combo = ({ children }: Kids) => (
  <div className="flex h-[25px] w-[221px] items-center justify-between rounded-[3px] border border-[#aaa49e] bg-linear-to-b from-[#fdfdfd] to-[#eeebe8] pr-1.5 pl-1">
    <div className="flex items-center gap-[3px]">{children}</div>
    <Arrow />
  </div>
);
const Row = ({ label, children }: Kids & { label: React.ReactNode }) => (
  <div className="flex h-[25px] items-center"><div className="flex w-[130px] shrink-0"><Raised>{label}</Raised></div>{children}</div>
);
const Section = ({ children }: Kids) => (
  <div className="flex h-[22px] shrink-0 items-center gap-[8px] pl-[14px] font-bold tracking-[-0.1px]">
    <svg width="11" height="7" viewBox="0 0 11 7"><path d="M.5.5h10L6.500 6.500h-2z" fill="#3c3936" stroke="#222" /></svg>
    <Raised>{children}</Raised>
  </div>
);
const ToolButton = ({ children, on = false }: Kids & { on?: boolean }) => (
  <div className={`mr-[3px] flex h-[27px] w-7 shrink-0 items-center justify-center rounded-[3px] border bg-linear-to-b from-[#fbfaf9] to-[#edeae7] ${on ? 'border-[#a39e99]' : 'border-[#c6c1bc]'}`}>
    <svg width="20" height="20" viewBox="0 0 20 20" className="block">{children}</svg>
  </div>
);

const ItemList = () => (
  <div className="flex h-[70px] shrink-0 flex-col border border-r-0 border-[#b5b0ab] bg-white">
    <div className="flex h-[20px] shrink-0 border-b border-[#c4bfba] bg-linear-to-b from-[#faf8f6] to-[#ebe7e3]">
      <div className="flex w-[57px] items-center border-r border-[#c9c4bf] pl-[3px]">
        <svg width="15" height="11" viewBox="0 0 15 11"><path d="M0 6c3-4.500 11-4.500 15 0-4 3.500-11 4-15 0z" fill="#e8e8e6" stroke="#9a9a98" /><path d="M1 3c4-3.500 9-3 12-.5" fill="none" stroke="#aaa" /><circle cx="7.500" cy="5.800" r="2.800" fill="#777" /><circle cx="7.500" cy="5.800" r="1.300" fill="#222" /></svg>
      </div>
      <div className="flex w-[57px] items-center border-r border-[#c9c4bf] pl-[3px]">
        <svg width="14" height="16" viewBox="0 0 14 16"><path d="M3.500 8V5a3.500 3.500 0 0 1 7 0v3" fill="none" stroke="#777" strokeWidth="1.600" /><rect x="1" y="7" width="12" height="8" rx="1" fill="#555" /></svg>
      </div>
      <div className="flex items-center pl-[2px]">Položka</div>
    </div>
    {[0, 1].map((i) => (
      <div key={i} className={`flex h-[19px] shrink-0 items-center ${i === 0 ? 'bg-[#308cc6] font-bold tracking-[-0.1px] text-white' : ''}`}>
        <div className="w-[57px] pl-[3px]"><Check on plain={i === 0} /></div>
        <div className="w-[60px] pl-[3px]"><Check plain={i === 0} /></div>
        <div className="flex items-center gap-1.5">
          {i === 0 ? (
            <svg width="16" height="16" viewBox="0 0 16 16"><path d="M6 3.500h6M6 8h9M6 12.500h5" stroke="#7f9cb0" strokeWidth="1.500" /><path d="M1.500 2h3v3h-3zM1.500 6.500h3v3h-3zM1.500 11h3v3h-3z" fill="#5b9cc9" stroke="#1f5377" /></svg>
          ) : <SmallSheet />}
          <Raised>{i === 0 ? '<Legend>' : 'Mapa 1'}</Raised>
        </div>
      </div>
    ))}
  </div>
);

const LegendTree = () => (
  <div className="mt-1.5 flex h-[250px] w-[351px] shrink-0 flex-col border border-[#b5b0ab] bg-white">
    <div className="flex h-[19px] shrink-0 items-center bg-[#308cc6] pl-[5px] font-bold text-white">
      <svg width="10" height="5" viewBox="0 0 10 5"><path d="M0 0h10L5 5z" fill="#123a56" /></svg>
      <svg width="16" height="12" viewBox="0 0 16 12" className="mr-[6px] ml-[8px]"><path d="M.5 2c2-2.500 4 0 7 0s5-2 8-1c-1 3-1 5 0 8-3-1-5-2-8 0-2 1.500-3 1.500-4 2.500-3-2-3-6-3-9.500z" fill="#8fb3cf" /></svg>
      <Raised><span className="underline underline-offset-2">Výčet krajů</span></Raised>
    </div>
    {REGIONS.map((r) => (
      <div key={r.name} className="flex h-[19px] shrink-0 items-center pl-[43px]">
        <svg width="18" height="18" className="mr-1.5 block"><rect x=".5" y=".5" width="17" height="17" fill={r.color} stroke="#222" strokeOpacity=".6" /></svg>
        <Raised>{r.name}</Raised>
      </div>
    ))}
  </div>
);

const TreeButtons = () => (
  <div className="mt-1.5 flex shrink-0">
    <ToolButton><path d="M1.500 3.500h17L10 15.500z" fill="#a8a5a2" stroke="#777" /></ToolButton>
    <ToolButton><path d="M1.500 15.500h17L10 3.500z" fill="#a8a5a2" stroke="#777" /></ToolButton>
    <ToolButton><path d="M1.500 8.500v9h10M4.500 6v9h9V6zM7.500 3.500v9M10.500 12.500V1.500M7.500 3.500h6M10 5h6v9" fill="none" stroke="#9b9895" /><path d="M14.500 12v6M11.500 15h6" stroke="#888" strokeWidth="3" /></ToolButton>
    <ToolButton><path d="M7.500 1.500h5v6h6v5h-6v6h-5v-6h-6v-5h6z" fill="#f2f0ee" stroke="#999" /><path d="M10 4v12M4 10h12" stroke="#a5a29f" strokeWidth="2" /></ToolButton>
    <ToolButton><rect x="1.500" y="7.500" width="17" height="5" fill="#f2f0ee" stroke="#999" /><path d="M4 10h12" stroke="#a5a29f" strokeWidth="2" /></ToolButton>
    <ToolButton><path d="M2.500 1.500h10l3 3v14h-13z" fill="#fafafa" stroke="#b5b2af" /><path d="M17 3L9.500 13.500l-1 3 3-1.500L19 4.500z" fill="#ddd" stroke="#999" /></ToolButton>
    <ToolButton><path d="M3.500 2h12v4h-1L13.500 4H7.500l4.500 5.500-5 5.500h7l1.500-2.500h1L15.500 17.500h-12v-1l5.500-6.500-5.500-7z" fill="#777471" /></ToolButton>
    <ToolButton on><path d="M1.500 1.500h17v3h-17z" fill="#fce94f" stroke="#b7a41b" /><path d="M2 5.500h16l-6 6v7l-4-2v-5z" fill="#6b9bd1" stroke="#3465a4" /></ToolButton>
    <div className="flex h-[27px] w-7 shrink-0 items-center justify-center rounded-l-[3px] border border-[#c6c1bc] bg-linear-to-b from-[#fbfaf9] to-[#edeae7]">
      <svg width="22" height="20" viewBox="0 0 22 20"><path d="M11 3.500C9 1 4 2 4 5c0 2 2 2.500 4.500 2.500C5 7.500 3 9 3 11c0 4 6 4 8.500 1.500" fill="none" stroke="#8f8c89" strokeWidth="1.800" /><path d="M12.500 18v-6.500h8V18h-2.500v-4h-3v4z" fill="#e2dfdc" stroke="#b1aeab" /></svg>
    </div>
    <div className="flex h-[27px] w-3 shrink-0 items-center justify-center rounded-r-[3px] border border-l-0 border-[#c6c1bc] bg-linear-to-b from-[#fbfaf9] to-[#edeae7]"><Arrow color="#c4bfba" /></div>
  </div>
);

const Properties = () => (
  <div className="flex h-[575px] shrink-0 border border-r-0 border-[#b5b0ab]">
    <div className="flex flex-1 flex-col overflow-hidden pt-[10px]">
      <Section>Main Properties</Section>
      <div className="ml-[12px] flex h-[175px] w-[378px] shrink-0 flex-col gap-1.5 rounded-[2px] border border-[#d6d1cc] bg-[#ebe8e4] pt-[12px] pl-[12px]">
        <div className="mb-px">
          <Row label={<span><span className="underline underline-offset-2">N</span>adpis</span>}>
            <div className="flex h-[25px] w-[185px] items-center rounded-[3px] border border-[#2f7fb4] bg-white pl-[2px]"><div className="h-[17px] w-px bg-black" /></div>
            <svg width="24" height="18" viewBox="0 0 24 18" className="ml-[9px]"><path d="M1 9l5-5.500v11z" fill="#8f8c89" stroke="#666" /><rect x="6.500" y="1.500" width="12" height="15" fill="#f4f4f4" stroke="#777" /><path d="M9 5h8M8 9h9M8 12.500h9" stroke="#444" strokeWidth="1.400" /><path d="M16 12.500h8l-4 4z" fill="#222" /></svg>
          </Row>
        </div>
        <Row label="Zarovnání nadpisu"><Combo><Raised>Nalevo</Raised></Combo></Row>
        <Row label="Mapa"><Combo><SmallSheet /><Raised>Mapa 1</Raised></Combo></Row>
        <Row label="Zalamovat text na"><div className="h-[25px] w-[221px] rounded-[3px] border border-[#aaa49e] bg-white" /></Row>
        <div className="flex h-6 items-center gap-[5px]"><Check on /><Raised>Změnit velikost podle obsahu</Raised></div>
      </div>
      <div className="h-[5px] shrink-0" />
      <Section>Legend Items</Section>
      <div className="ml-[12px] flex h-[360px] w-[378px] shrink-0 flex-col rounded-[2px] border border-[#d6d1cc] bg-[#ebe8e4] pt-[12px] pl-[12px]">
        <div className="flex h-6 w-[351px] shrink-0 items-center justify-between">
          <div className="flex items-center gap-[5px] tracking-[0.02px]"><Check on /><Raised>Automatická aktualizace</Raised></div>
          <div className="flex h-6 w-[86px] items-center justify-center rounded-[3px] border border-[#c6c1bc] bg-linear-to-b from-[#f8f6f4] to-[#eeebe8] tracking-[0.1px] text-[#c4bfba]">Update All</div>
        </div>
        <LegendTree />
        <TreeButtons />
        <div className="mt-2 flex shrink-0 items-center gap-[5px]"><div className="pt-0.5"><Check /></div><Raised>Only show items inside current atlas feature</Raised></div>
      </div>
    </div>
    <div className="flex w-[15px] shrink-0 flex-col border-l border-[#b5b0ab] bg-[#e3dfdb]">
      <div className="flex h-[14px] items-center justify-center border-b border-[#b5b0ab] bg-[#f8f6f4]"><Arrow up /></div>
      <div className="h-[260px] border-b border-[#b5b0ab] bg-linear-to-r from-[#fdfdfd] to-[#efecea]" />
      <div className="flex-1" />
      <div className="flex h-[14px] items-center justify-center border-t border-[#b5b0ab] bg-[#f8f6f4]"><Arrow /></div>
    </div>
  </div>
);

const Dock = () => (
  <div className="flex w-[417px] shrink-0 flex-col">
    <div className="flex h-[29px] shrink-0 items-end border-b border-[#b5b0ab]">
      <Tab active size="h-[27px] w-[79px] -mb-px pb-[2px]">Položky</Tab>
      <Tab size="h-[25px] w-[114px] border-b-0">Undo History</Tab>
    </div>
    <DockTitle>Položky</DockTitle>
    <ItemList />
    <div className="flex h-1.5 shrink-0 items-center justify-center">
      <svg width="17" height="1"><path d="M0 .5h17" stroke="#b0aba5" strokeDasharray="1 2" /></svg>
    </div>
    <div className="flex h-7 shrink-0 items-end border-b border-[#b5b0ab]">
      <Tab size="h-[26px] w-[90px] border-b-0 border-l">Rozvržení</Tab>
      <Tab active size="h-[28px] w-[151px] -mb-px pb-[2px] tracking-[0.08px]">Vlastnosti položky</Tab>
      <Tab size="h-[26px] w-[77px] border-b-0">Vodítka</Tab>
      <Tab size="h-[26px] w-[58px] border-b-0">Atlas</Tab>
    </div>
    <DockTitle>Vlastnosti položky</DockTitle>
    <div className="flex h-[21px] shrink-0 items-center bg-[#c6c6c6] pl-1.5 font-bold"><Raised>Legenda</Raised></div>
    <Properties />
  </div>
);

const StatusBar = () => (
  <div className="flex h-[30px] shrink-0 items-center whitespace-nowrap">
    <div className="w-[929px] pl-1.5">1 položka vybrána</div>
    <div className="w-[106px]">x: 319.874 mm</div>
    <div className="w-[106px]">y: 40.6899 mm</div>
    <div className="w-[106px]">strana: 1</div>
    <div className="flex h-[25px] w-[203px] items-center overflow-hidden rounded-[3px] border border-[#aaa49e] bg-white">
      <div className="flex-1 pl-[3px]">65.0%</div>
      <div className="flex h-full w-[20px] items-center justify-center border-l border-[#aaa49e] bg-linear-to-b from-[#fdfdfd] to-[#eeebe8]"><Arrow /></div>
    </div>
    <svg width="107" height="26" viewBox="1450 848 107 26" className="block">
      <rect x="1457.500" y="859.500" width="97" height="4" rx="2" fill="#d5d0cb" stroke="#aaa49e" />
      <rect x="1457.500" y="859.500" width="10" height="4" rx="2" fill="#3daee9" stroke="#2b7fb4" />
      <rect x="1462.500" y="855.500" width="12" height="12" rx="2.500" fill="#f8f7f6" stroke="#9c9792" />
    </svg>
  </div>
);

export default function App() {
  return (
    <div className="flex h-[876px] w-[1557px] flex-col overflow-hidden bg-[#efebe7] font-['Noto_Sans','Open_Sans',sans-serif] text-[14.500px] leading-[18px] tracking-[-0.05px] text-black">
      <svg width="0" height="0" className="absolute">
        <linearGradient id="sheet"><stop offset="0" stopColor="#c4c4c4" /><stop offset="1" stopColor="#ededed" /></linearGradient>
      </svg>
      <TopBar />
      <SecondBar />
      <div className="flex h-[769px] shrink-0">
        <SideBar />
        <div className="flex w-[1094px] shrink-0 flex-col">
          <TopRuler />
          <div className="flex"><LeftRuler /><Canvas /></div>
        </div>
        <div className="flex w-1.5 shrink-0 items-center justify-center">
          <svg width="1" height="17"><path d="M.5 0v17" stroke="#b0aba5" strokeDasharray="1 2" /></svg>
        </div>
        <Dock />
      </div>
      <StatusBar />
    </div>
  );
}
